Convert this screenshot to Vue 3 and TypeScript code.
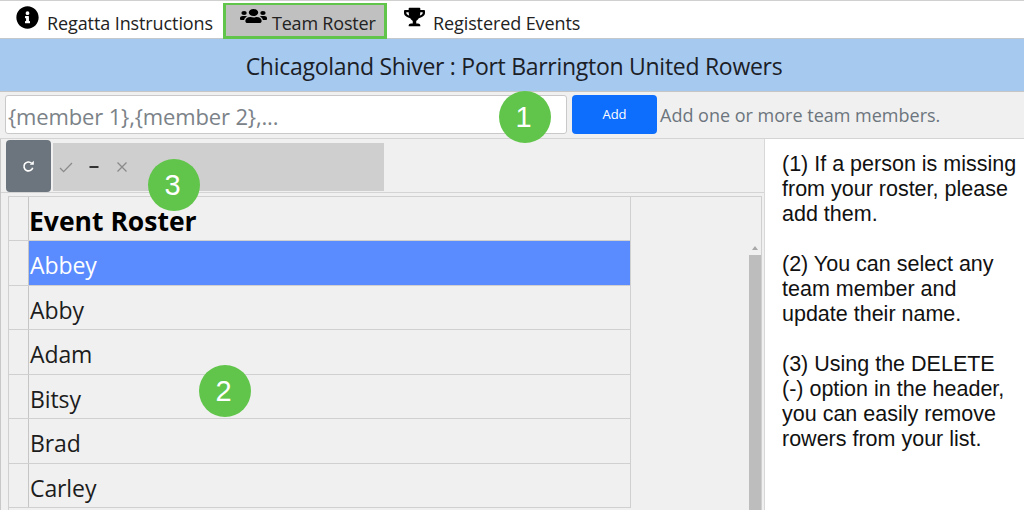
<script setup lang="ts">
const rows: string[] = ['Abbey', 'Abby', 'Adam', 'Bitsy', 'Brad', 'Carley']
const notes: string[] = [
  '(1) If a person is missing from your roster, please add them.',
  '(2) You can select any team member and update their name.',
  '(3) Using the DELETE (-) option in the header, you can easily remove rowers from your list.',
]
</script>

<template>
  <div class="page">
    <nav class="tabs">
      <div class="tab first">
        <svg class="ic info" viewBox="0 0 512 512"><path d="M256 8C119 8 8 119 8 256s111 248 248 248 248-111 248-248S393 8 256 8zm0 110a42 42 0 1 1 0 84 42 42 0 0 1 0-84zm56 254c0 7-5 12-12 12h-88c-7 0-12-5-12-12v-24c0-7 5-12 12-12h12v-64h-12c-7 0-12-5-12-12v-24c0-7 5-12 12-12h64c7 0 12 5 12 12v100h12c7 0 12 5 12 12z"/></svg>
        <span>Regatta Instructions</span>
      </div>
      <div class="tab active">
        <svg class="ic users" viewBox="0 32 640 448" preserveAspectRatio="none"><path d="M96 224a64 64 0 1 0 0-128 64 64 0 0 0 0 128zm448 0a64 64 0 1 0 0-128 64 64 0 0 0 0 128zm32 32h-64c-18 0-34 7-45 19 40 22 69 62 75 109h66c18 0 32-14 32-32v-32c0-35-29-64-64-64zm-256 0a112 112 0 1 0 0-224 112 112 0 0 0 0 224zm77 32h-8c-21 10-44 16-69 16s-48-6-69-16h-8c-64 0-115 52-115 115v29c0 27 21 48 48 48h288c27 0 48-21 48-48v-29c0-63-51-115-115-115zm-224-13c-11-12-27-19-45-19H64c-35 0-64 29-64 64v32c0 18 14 32 32 32h66c6-47 35-87 75-109z"/></svg>
        <span>Team Roster</span>
      </div>
      <div class="tab third">
        <svg class="ic trophy" viewBox="0 0 576 512"><path d="M552 64H448V24c0-13-11-24-24-24H152c-13 0-24 11-24 24v40H24C11 64 0 75 0 88v56c0 36 23 73 62 101 31 23 69 37 109 42 31 52 69 73 69 73v72h-48c-35 0-64 21-64 56v12c0 7 5 12 12 12h296c7 0 12-5 12-12v-12c0-35-29-56-64-56h-48v-72s38-21 69-73c40-5 78-19 109-42 39-28 62-65 62-101V88c0-13-11-24-24-24zM99 193c-24-18-35-37-35-49v-16h64c1 33 6 61 13 86-15-5-29-12-42-21zm413-49c0 17-19 35-35 49-13 9-27 16-42 21 7-25 12-53 13-86h64z"/></svg>
        <span>Registered Events</span>
      </div>
    </nav>

    <header class="banner">Chicagoland Shiver : Port Barrington United Rowers</header>

    <section class="add-row">
      <div class="fake-input">{member 1},{member 2},...</div>
      <button class="add-btn" type="button">Add</button>
      <span class="hint">Add one or more team members.</span>
      <div class="badge b1">1</div>
    </section>

    <main class="body">
      <section class="left">
        <div class="toolbar">
          <button class="refresh" type="button" aria-label="Refresh">
            <svg viewBox="0 0 16 16" width="13" height="13" fill="none" stroke="#fff" stroke-width="2"><path d="M13.2 9.5A5.5 5.5 0 1 1 11.8 4"/><path d="M9.5 5.8h5v-5z" fill="#fff" stroke="none"/></svg>
          </button>
          <div class="actions">
            <svg viewBox="0 0 14 14" width="14" height="14" fill="none" stroke="#8a8a8a" stroke-width="1.3"><path d="M1 8l3.6 3.6L13 3"/></svg>
            <svg viewBox="0 0 14 14" width="14" height="14" fill="none" stroke="#222" stroke-width="1.8"><path d="M2.500 7h9"/></svg>
            <svg viewBox="0 0 14 14" width="14" height="14" fill="none" stroke="#8a8a8a" stroke-width="1.3"><path d="M2.500 2.500l9 9M11.500 2.500l-9 9"/></svg>
          </div>
          <div class="badge b3">3</div>
        </div>
        <div class="grid-wrap">
          <div class="grid">
            <div class="row head">
              <div class="gutter"></div>
              <div class="cell">Event Roster</div>
            </div>
            <div v-for="(r, i) in rows" :key="r" class="row" :class="{ selected: i === 0 }">
              <div class="gutter"></div>
              <div class="cell">{{ r }}</div>
            </div>
          </div>
          <div class="scroll">
            <div class="arrow"></div>
            <div class="thumb"></div>
          </div>
          <div class="badge b2">2</div>
        </div>
      </section>
      <aside class="notes">
        <p v-for="n in notes" :key="n">{{ n }}</p>
      </aside>
    </main>
  </div>
</template>

<style>
html, body { margin: 0; background: #fff; overflow: hidden; }
</style>

<style scoped>
.page {
  width: 1024px;
  height: 510px;
  overflow: hidden;
  position: relative;
  font-family: "Open Sans", "Noto Sans", sans-serif;
  color: #212529;
  background: #fff;
  box-sizing: border-box;
  border-top: 1px solid #d0d0d0;
}
.tabs {
  display: flex;
  height: 37px;
  border-bottom: 1px solid #c4c8cc;
  box-sizing: content-box;
  padding-left: 1px;
}
.tab {
  display: flex;
  align-items: flex-start;
  box-sizing: border-box;
  height: 38px;
  font-size: 18px;
  letter-spacing: -0.1px;
  white-space: nowrap;
  color: #222;
}
.tab span { margin-top: 10px; line-height: 24px; }
.first { width: 222px; padding-left: 15px; }
.first span { margin-left: 8px; }
.active {
  width: 164px;
  padding-left: 14px;
  background: #c0c0c0;
  border: 3px solid #61c54b;
  border-top-width: 2px;
  margin-top: 2px;
  height: 36px;
  letter-spacing: -0.2px;
}
.active span { margin-top: 6px; margin-left: 5px; }
.third { padding-left: 17px; }
.third span { margin-left: 8px; }
.ic { display: block; fill: #000; flex: none; }
.info { width: 23px; height: 23px; margin-top: 5px; }
.users { width: 27px; height: 14px; margin-top: 4px; }
.trophy { width: 21px; height: 20px; margin-top: 6px; }
.banner {
  height: 52px;
  padding: 2px 0 0 4px;
  box-sizing: border-box;
  height: 53px;
  background: #a6c9f0;
  border-bottom: 1px solid #c6c6c6;
  display: flex;
  align-items: center;
  justify-content: center;
  font-size: 23px;
  letter-spacing: -0.28px;
  color: #1b2026;
}
.add-row {
  position: relative;
  display: flex;
  align-items: center;
  height: 47px;
  background: #f0f0f0;
  padding: 0 0 2px 5px;
  box-sizing: border-box;
  border-bottom: 1px solid #d4d4d4;
}
.fake-input {
  width: 562px;
  height: 39px;
  background: #fff;
  border: 1px solid #c9c9c9;
  border-radius: 3px;
  box-sizing: border-box;
  font-size: 22px;
  line-height: 40px;
  padding-left: 2px;
  letter-spacing: -0.15px;
  color: #7b8288;
  overflow: hidden;
  white-space: nowrap;
}
.add-btn {
  width: 85px;
  height: 39px;
  margin-left: 5px;
  background: #0d6efd;
  color: #fff;
  border: 0;
  border-radius: 4px;
  font-family: inherit;
  font-size: 13px;
  padding: 0;
}
.hint {
  margin: 2px 0 0 3px;
  font-size: 18px;
  color: #6c757d;
  white-space: nowrap;
}
.badge {
  position: absolute;
  width: 52px;
  height: 52px;
  border-radius: 50%;
  background: #61c54b;
  color: #fff;
  display: flex;
  align-items: center;
  justify-content: center;
  padding-right: 3px;
  box-sizing: border-box;
  font-family: "Liberation Sans", sans-serif;
  font-size: 29px;
  z-index: 2;
}
.b1 { left: 499px; top: -1px; }
.b3 { left: 147px; top: 19px; }
.b2 { left: 190px; top: 168px; }
.body { display: flex; height: 372px; }
.left {
  width: 765px;
  flex: none;
  box-sizing: border-box;
  background: #f0f0f0;
  border-left: 1px solid #c8c8c8;
  border-right: 1px solid #d8d8d8;
  padding-left: 5px;
  position: relative;
}
.toolbar {
  display: flex;
  align-items: center;
  height: 53px;
  margin: 1px 0 0 -5px;
  padding-left: 5px;
  border-bottom: 1px solid #d4d4d4;
  box-sizing: border-box;
  position: relative;
}
.refresh {
  width: 45px;
  height: 52px;
  background: #6c757d;
  border: 0;
  border-radius: 4px;
  padding: 0;
  display: flex;
  align-items: center;
  justify-content: center;
}
.actions {
  margin: 2px 0 0 2px;
  width: 331px;
  height: 48px;
  background: #cfcfcf;
  display: flex;
  align-items: center;
  gap: 14px;
  padding-left: 6px;
  box-sizing: border-box;
}
.grid-wrap {
  position: relative;
  margin: 3px 2px 0 2px;
  border: 1px solid #d0d0d0;
  border-bottom: 0;
  height: 320px;
  overflow: hidden;
}
.grid { width: 621px; border-right: 1px solid #d0d0d0; }
.row {
  display: flex;
  height: 44.500px;
  border-bottom: 1px solid #d0d0d0;
  box-sizing: border-box;
}
.head { height: 44px; font-weight: 700; }
.gutter { width: 19px; flex: none; border-right: 1px solid #c6c6c6; }
.cell {
  flex: 1;
  font-size: 23px;
  line-height: 44px;
  padding: 2px 0 0 1px;
  box-sizing: border-box;
  letter-spacing: -0.1px;
  color: #1c1c1c;
}
.head .cell { font-size: 26.500px; letter-spacing: 0; color: #000; line-height: 48px; padding: 0; }
.selected .cell { background: #5b8cff; color: #fff; }
.scroll {
  position: absolute;
  left: 740px;
  top: 44px;
  width: 12px;
}
.arrow {
  width: 0;
  height: 0;
  margin: 5px auto 5px;
  border-left: 3.500px solid transparent;
  border-right: 3.500px solid transparent;
  border-bottom: 4px solid #a8a8a8;
}
.thumb { height: 300px; background: #bdbdbd; }
.notes {
  flex: 1;
  padding: 13px 0 0 17px;
  font-family: "Liberation Sans", Arial, sans-serif;
  font-size: 21.500px;
  line-height: 25px;
  color: #111;
}
.notes p { margin: 0 0 25px; width: 237px; }
</style>
